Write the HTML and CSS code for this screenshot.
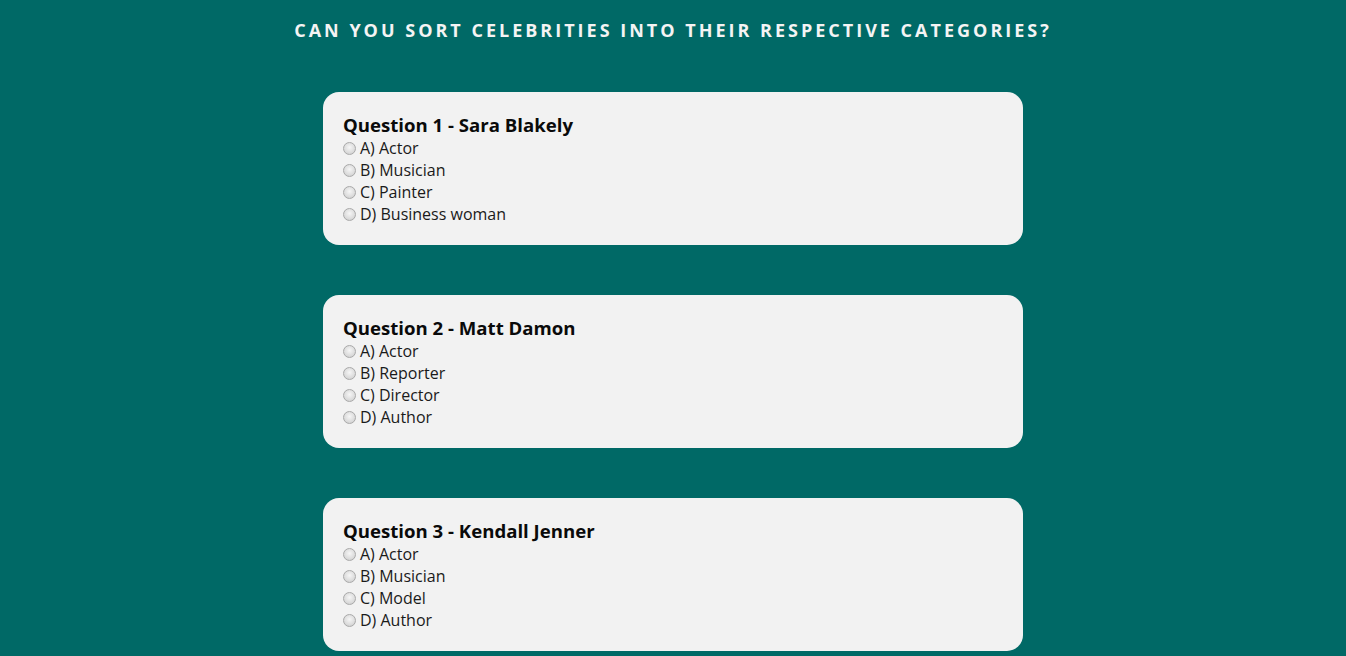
FILE: index.html
```html
<!DOCTYPE html>
<html>
<head>
<meta charset="utf-8">
<link rel="stylesheet" href="styles.css">
</head>
<body>
<h1 class="title">Can you sort celebrities into their respective categories?</h1>
<main class="quiz">
  <section class="card">
    <h2 class="question">Question 1 - Sara Blakely</h2>
    <label class="option"><input type="radio" name="q1" class="radio">A) Actor</label>
    <label class="option"><input type="radio" name="q1" class="radio">B) Musician</label>
    <label class="option"><input type="radio" name="q1" class="radio">C) Painter</label>
    <label class="option"><input type="radio" name="q1" class="radio">D) Business woman</label>
  </section>
  <section class="card">
    <h2 class="question">Question 2 - Matt Damon</h2>
    <label class="option"><input type="radio" name="q2" class="radio">A) Actor</label>
    <label class="option"><input type="radio" name="q2" class="radio">B) Reporter</label>
    <label class="option"><input type="radio" name="q2" class="radio">C) Director</label>
    <label class="option"><input type="radio" name="q2" class="radio">D) Author</label>
  </section>
  <section class="card">
    <h2 class="question">Question 3 - Kendall Jenner</h2>
    <label class="option"><input type="radio" name="q3" class="radio">A) Actor</label>
    <label class="option"><input type="radio" name="q3" class="radio">B) Musician</label>
    <label class="option"><input type="radio" name="q3" class="radio">C) Model</label>
    <label class="option"><input type="radio" name="q3" class="radio">D) Author</label>
  </section>
</main>
</body>
</html>
```
FILE: styles.css
```css
html, body {
  margin: 0;
  padding: 0;
}
body {
  background: #006966;
  font-family: "Open Sans", "Liberation Sans", sans-serif;
  color: #111;
}
.title {
  margin: 0;
  padding-top: 18px;
  height: 74px;
  box-sizing: border-box;
  text-align: center;
  text-transform: uppercase;
  color: #f4f4f4;
  font-size: 18px;
  font-weight: 700;
  letter-spacing: 3px;
  line-height: 24px;
}
.quiz {
  display: flex;
  flex-direction: column;
  align-items: center;
  gap: 50px;
  padding-top: 18px;
}
.card {
  width: 700px;
  box-sizing: border-box;
  height: 153px;
  background: #f2f2f2;
  border-radius: 16px;
  padding: 21px 20px 20px;
  display: flex;
  flex-direction: column;
}
.question {
  margin: 0;
  font-size: 18.6px;
  font-weight: 700;
  line-height: 24px;
  color: #0a0a0a;
}
.option {
  display: flex;
  align-items: center;
  font-size: 16px;
  line-height: 22px;
  color: #1a1a1a;
}
.radio {
  appearance: none;
  -webkit-appearance: none;
  width: 13px;
  height: 13px;
  margin: 0 4px 0 0;
  border-radius: 50%;
  border: 1px solid #a9a9a9;
  background: radial-gradient(circle at 50% 40%, #f6f6f6 0%, #dcdcdc 60%, #c8c8c8 100%);
  box-sizing: border-box;
  flex: none;
}
```
